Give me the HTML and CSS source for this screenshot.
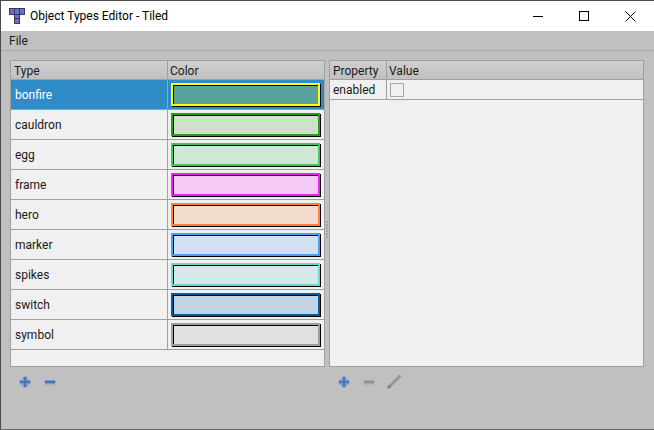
FILE: index.html
```html
<!DOCTYPE html>
<html lang="en">

<head>
    <meta charset="UTF-8">
    <meta name="viewport" content="width=device-width, initial-scale=1.0">
    <title>Object Types Editor - Tiled</title>
    <link rel="stylesheet" href="styles.css">
</head>

<body>
    <div class="window">
        <div class="titlebar">
            <svg class="app-icon" width="16" height="16" viewBox="0 0 16 16">
                <rect x="0" y="0" width="16" height="7" fill="#3a3a55" />
                <rect x="5" y="6" width="6" height="10" fill="#3a3a55" />
                <rect x="1" y="1" width="4" height="5" fill="#6c6cd6" />
                <rect x="6" y="1" width="4" height="5" fill="#6c6cd6" />
                <rect x="11" y="1" width="4" height="5" fill="#6c6cd6" />
                <rect x="6" y="7" width="4" height="3" fill="#6c6cd6" />
                <rect x="6" y="11" width="4" height="4" fill="#6c6cd6" />
            </svg>
            <span class="title">Object Types Editor - Tiled</span>
            <div class="window-buttons">
                <div class="win-btn">
                    <svg width="10" height="10" viewBox="0 0 10 10">
                        <path d="M0 5.5H10" stroke="#000" fill="none" />
                    </svg>
                </div>
                <div class="win-btn">
                    <svg width="10" height="10" viewBox="0 0 10 10">
                        <rect x="0.5" y="0.5" width="9" height="9" stroke="#000" fill="none" />
                    </svg>
                </div>
                <div class="win-btn">
                    <svg width="11" height="11" viewBox="0 0 11 11">
                        <path d="M0.5 0.5L10.5 10.5M10.5 0.5L0.5 10.5" stroke="#000" fill="none" />
                    </svg>
                </div>
            </div>
        </div>

        <div class="menubar"><span>File</span></div>

        <div class="content">
            <div class="pane">
                <div class="table">
                    <div class="head types-cols">
                        <div class="cell">Type</div>
                        <div class="cell color-head">Color</div>
                    </div>
                    <div class="row types-cols selected">
                        <div class="cell">bonfire</div>
                        <div class="color-cell"><div class="swatch" style="border-color:#ffff00;background:#5aa39c"></div></div>
                    </div>
                    <div class="row types-cols">
                        <div class="cell">cauldron</div>
                        <div class="color-cell"><div class="swatch" style="border-color:#2e9a1c;background:#cde2c8"></div></div>
                    </div>
                    <div class="row types-cols">
                        <div class="cell">egg</div>
                        <div class="color-cell"><div class="swatch" style="border-color:#3fc65e;background:#cfe8d6"></div></div>
                    </div>
                    <div class="row types-cols">
                        <div class="cell">frame</div>
                        <div class="color-cell"><div class="swatch" style="border-color:#ee22ee;background:#f5c9f5"></div></div>
                    </div>
                    <div class="row types-cols">
                        <div class="cell">hero</div>
                        <div class="color-cell"><div class="swatch" style="border-color:#ff8238;background:#f3dccd"></div></div>
                    </div>
                    <div class="row types-cols">
                        <div class="cell">marker</div>
                        <div class="color-cell"><div class="swatch" style="border-color:#4ba0f5;background:#d1e1f2"></div></div>
                    </div>
                    <div class="row types-cols">
                        <div class="cell">spikes</div>
                        <div class="color-cell"><div class="swatch" style="border-color:#6cd8d0;background:#d6e9ea"></div></div>
                    </div>
                    <div class="row types-cols">
                        <div class="cell">switch</div>
                        <div class="color-cell"><div class="swatch" style="border-color:#0a5a9c;background:#c2d4e2"></div></div>
                    </div>
                    <div class="row types-cols">
                        <div class="cell">symbol</div>
                        <div class="color-cell"><div class="swatch" style="border-color:#a0a0a4;background:#e0e0e0"></div></div>
                    </div>
                </div>
                <div class="toolbar">
                    <svg class="tool" width="16" height="16" viewBox="0 0 16 16"><use href="#plus" /></svg>
                    <svg class="tool" width="16" height="16" viewBox="0 0 16 16"><use href="#minus" /></svg>
                </div>
            </div>

            <div class="splitter"><div class="grip"></div></div>

            <div class="pane">
                <div class="table">
                    <div class="head props-cols">
                        <div class="cell">Property</div>
                        <div class="cell color-head">Value</div>
                    </div>
                    <div class="prop-row props-cols">
                        <div class="cell">enabled</div>
                        <div class="cell"><div class="checkbox"></div></div>
                    </div>
                </div>
                <div class="toolbar">
                    <svg class="tool" width="16" height="16" viewBox="0 0 16 16"><use href="#plus" /></svg>
                    <svg class="tool" width="16" height="16" viewBox="0 0 16 16"><use href="#minus-off" /></svg>
                    <svg class="tool" width="16" height="16" viewBox="0 0 16 16">
                        <path d="M14.5 1.5L3.5 12.5" stroke="#959595" stroke-width="3" fill="none" />
                        <path d="M2.6 10.6L1 15L5.4 13.4Z" fill="#808080" />
                    </svg>
                </div>
            </div>
        </div>
    </div>

    <svg width="0" height="0" class="defs">
        <defs>
            <g id="plus">
                <rect x="3" y="9.5" width="10" height="2" fill="#000" opacity="0.05" />
                <rect x="5.5" y="2.5" width="5" height="11" rx="1.5" fill="#7a9bc9" />
                <rect x="2.5" y="5.5" width="11" height="5" rx="1.5" fill="#7a9bc9" />
                <rect x="7" y="3" width="2" height="10" fill="#4576b8" />
                <rect x="3" y="7" width="10" height="2" fill="#4576b8" />
            </g>
            <g id="minus">
                <rect x="2.5" y="10" width="11" height="2" fill="#000" opacity="0.06" />
                <rect x="2.5" y="6" width="11" height="4" rx="1" fill="#7a9bc9" />
                <rect x="3" y="7" width="10" height="2" fill="#4576b8" />
            </g>
            <g id="minus-off">
                <rect x="2.5" y="10" width="11" height="2" fill="#000" opacity="0.05" />
                <rect x="2.5" y="6" width="11" height="4" rx="1" fill="#a6a6a6" />
                <rect x="3" y="7" width="10" height="2" fill="#949494" />
            </g>
        </defs>
    </svg>
</body>

</html>
```

FILE: styles.css
```css
* {
    box-sizing: border-box;
}

html,
body {
    margin: 0;
    padding: 0;
}

body {
    width: 654px;
    height: 430px;
    overflow: hidden;
    font-family: Roboto, "Noto Sans", Arial, sans-serif;
    font-size: 12px;
    color: #1a1a1a;
}

.defs {
    position: absolute;
}

.window {
    height: 430px;
    display: flex;
    flex-direction: column;
    background-color: #c0c0c0;
    border: 1px solid #4a4a4a;
    border-right: none;
    border-bottom-color: #6a6a6a;
}

/* Title bar */
.titlebar {
    height: 30px;
    flex: none;
    display: flex;
    align-items: center;
    background-color: #fff;
    padding-left: 8px;
}

.app-icon {
    margin-right: 5px;
    margin-top: -1px;
}

.title {
    color: #000;
}

.window-buttons {
    margin-left: auto;
    display: flex;
    padding-right: 1px;
}

.win-btn {
    width: 46px;
    height: 28px;
    display: flex;
    align-items: center;
    justify-content: center;
}

/* Menu */
.menubar {
    height: 20px;
    flex: none;
    display: flex;
    align-items: center;
    padding-left: 8px;
    border-bottom: 1px solid #a8a8a8;
}

/* Panes */
.content {
    flex: 1;
    display: flex;
    padding: 9px 10px 0 9px;
}

.pane {
    flex: none;
    width: 315px;
    display: flex;
    flex-direction: column;
}

.splitter {
    flex: none;
    width: 4px;
    display: flex;
    align-items: center;
    justify-content: center;
    padding-bottom: 30px;
}

.grip {
    width: 2px;
    height: 17px;
    background: repeating-linear-gradient(to bottom, #a4a4a4 0, #a4a4a4 2px, transparent 2px, transparent 3px);
}

.table {
    height: 307px;
    background-color: #f0f0f0;
    border: 1px solid #a0a0a0;
}

.types-cols {
    display: grid;
    grid-template-columns: 157px 156px;
}

.props-cols {
    display: grid;
    grid-template-columns: 57px 1fr;
}

.head {
    height: 19px;
    background: linear-gradient(to bottom, #cfcfcf, #c0c0c0);
    border-bottom: 1px solid #a0a0a0;
}

.head .cell {
    display: flex;
    align-items: center;
    padding: 1px 0 0 3px;
    border-right: 1px solid #a0a0a0;
}

.head .color-head {
    padding-left: 2px;
    border-right: none;
}

.row {
    height: 30px;
    border-bottom: 1px solid #a0a0a0;
}

.row > .cell {
    display: flex;
    align-items: center;
    padding-left: 4px;
    border-right: 1px solid #a0a0a0;
}

.selected {
    background-color: #308cc6;
}

.selected > .cell {
    color: #fff;
}

.color-cell {
    padding: 3px 0 0 3px;
}

/* color swatch with the offset black shadow */
.swatch {
    width: 149px;
    height: 23px;
    border: 2px solid;
    box-shadow: 1px 1px 0 #000, inset 1px 1px 0 #000;
}

.prop-row {
    height: 20px;
    border-bottom: 1px solid #a0a0a0;
}

.prop-row .cell {
    display: flex;
    align-items: center;
    padding-left: 3px;
}

.prop-row .cell:first-child {
    border-right: 1px solid #a0a0a0;
}

.checkbox {
    width: 14px;
    height: 14px;
    background-color: #f0f0f0;
    border: 1px solid #a8a8a8;
}

/* Bottom toolbars */
.toolbar {
    display: flex;
    gap: 9px;
    padding: 7px 0 0 7px;
}
```
